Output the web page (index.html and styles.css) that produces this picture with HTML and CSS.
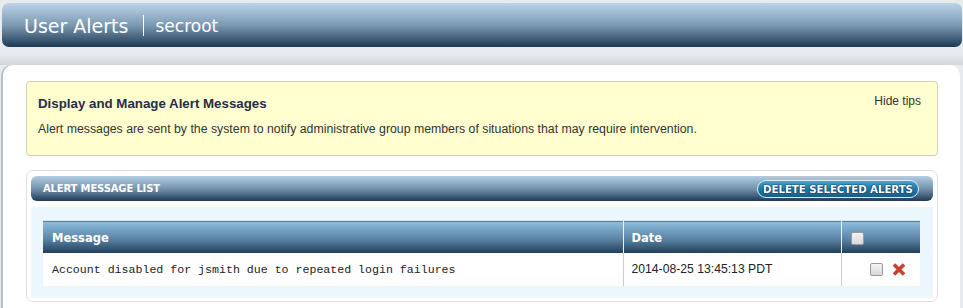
FILE: index.html
```html
<!DOCTYPE html>
<html>
<head>
<meta charset="utf-8">
<link rel="stylesheet" href="styles.css">
</head>
<body>
<div class="topbar">
  <span class="app-title">User Alerts</span>
  <span class="divider"></span>
  <span class="user">secroot</span>
</div>
<div class="gap"></div>
<div class="panel">
  <div class="tips">
    <div class="tips-head">
      <span class="tips-title">Display and Manage Alert Messages</span>
      <span class="hide-tips">Hide tips</span>
    </div>
    <p class="tips-text">Alert messages are sent by the system to notify administrative group members of situations that may require intervention.</p>
  </div>
  <div class="list-box">
    <div class="list-bar">
      <span class="list-title">ALERT MESSAGE LIST</span>
      <span class="btn-delete">DELETE SELECTED ALERTS</span>
    </div>
    <div class="list-body">
      <table class="alerts">
        <thead>
          <tr>
            <th class="col-msg">Message</th>
            <th class="col-date">Date</th>
            <th class="col-act"><span class="chk"></span></th>
          </tr>
        </thead>
        <tbody>
          <tr>
            <td class="msg">Account disabled for jsmith due to repeated login failures</td>
            <td class="date">2014-08-25 13:45:13 PDT</td>
            <td class="act"><span class="chk"></span><svg class="xicon" width="14" height="13" viewBox="0 0 14 13"><path d="M2 1.5 L12 11.5 M12 1.5 L2 11.5" stroke="#c8402c" stroke-width="3.6" stroke-linecap="butt"/></svg></td>
          </tr>
        </tbody>
      </table>
    </div>
  </div>
</div>
</body>
</html>
```

FILE: styles.css
```css
html, body {
  margin: 0;
  padding: 0;
}
body {
  background: #e8ebee;
  font-family: "Liberation Sans", Arial, sans-serif;
  width: 963px;
  height: 308px;
  overflow: hidden;
}
.topbar {
  margin: 3px 1px 0 2px;
  height: 44px;
  border-radius: 7px;
  background: linear-gradient(#bcd4e8, #7d9ab3 50%, #1d3954);
  display: flex;
  align-items: center;
  padding: 1px 0 0 22px;
  color: #fff;
  box-sizing: border-box;
}
.app-title {
  font-family: "DejaVu Sans", Verdana, sans-serif;
  font-size: 19px;
}
.divider {
  width: 1px;
  height: 21px;
  background: #fff;
  margin: 0 11px 0 15px;
}
.user {
  font-family: "DejaVu Sans", Verdana, sans-serif;
  font-size: 17px;
}
.gap {
  height: 18px;
  background: linear-gradient(#e8ebee 40%, #d2d6db);
}
.panel {
  margin: 0 3px 0 3px;
  background: #fff;
  border-radius: 10px 10px 0 0;
  padding: 16px 22px 0 23px;
  box-shadow: -2px 0 0 #b8c0c8;
  height: 243px;
  box-sizing: border-box;
}
.tips {
  background: #ffffcf;
  border: 1px solid #cfcfb8;
  border-radius: 4px;
  height: 75px;
  box-sizing: border-box;
  padding: 12px 16px 0 11px;
  color: #333;
  font-size: 12.3px;
}
.tips-head {
  display: flex;
  justify-content: space-between;
  align-items: flex-start;
}
.tips-title {
  font-weight: bold;
  font-size: 13.3px;
  color: #262d45;
  padding-top: 2px;
}
.hide-tips {
  color: #333;
  font-size: 12px;
}
.tips-text {
  margin: 11px 0 0 0;
}
.list-box {
  margin-top: 14px;
  border: 1px solid #dedede;
  border-radius: 7px;
  padding: 5px 4px 4px 4px;
  height: 132px;
  box-sizing: border-box;
}
.list-bar {
  height: 25px;
  border-radius: 6px;
  background: linear-gradient(#b3cee3, #6f8da8 55%, #1d3954);
  display: flex;
  align-items: center;
  justify-content: space-between;
  padding: 0 14px 0 12px;
}
.list-title {
  font-family: "DejaVu Sans", Verdana, sans-serif;
  font-weight: bold;
  font-size: 10px;
  color: #fff;
  letter-spacing: -0.15px;
}
.btn-delete {
  height: 18px;
  width: 162px;
  box-sizing: border-box;
  border: 1px solid #d8ecf6;
  border-radius: 9px;
  background: linear-gradient(#4aa2cf, #1e78ac 50%, #11608f);
  font-family: "DejaVu Sans", Verdana, sans-serif;
  font-weight: bold;
  font-size: 10.3px;
  color: #fff;
  letter-spacing: -0.1px;
  display: flex;
  align-items: center;
  justify-content: center;
  text-shadow: 0 0 1px #082c45, 0 0 1px #082c45, 0 0 1px #082c45;
  margin-top: 1px;
}
.list-body {
  margin-top: 6px;
  background: #ebf7fd;
  padding: 13px 13px 12px 12px;
}
.alerts {
  width: 100%;
  border-collapse: collapse;
  table-layout: fixed;
}
.alerts th {
  height: 32px;
  box-sizing: border-box;
  background: linear-gradient(#8dbedf, #5b84a4 55%, #1f3c58);
  color: #fff;
  font-family: "DejaVu Sans", Verdana, sans-serif;
  font-size: 11.5px;
  font-weight: bold;
  text-align: left;
  padding: 3px 0 0 9px;
  border-top: 1px solid #d6e8f3;
}
.alerts th + th {
  border-left: 1px solid #e8f2f8;
}
.col-msg { width: 580px; }
.col-date { width: 218px; }
.alerts th.col-date { padding-left: 8px; }
.col-act { width: auto; }
.alerts td {
  height: 33px;
  background: #fff;
  padding: 0 0 0 9px;
  color: #222;
}
.alerts td + td {
  border-left: 1px solid #cccccc;
}
.msg {
  font-family: "Liberation Mono", "Courier New", monospace;
  font-size: 11.6px;
}
.alerts td.date {
  font-size: 12.2px;
  padding-left: 8px;
}
.alerts td.act {
  text-align: right;
  padding: 0 14px 0 0;
}
.chk {
  display: inline-block;
  width: 11px;
  height: 11px;
  border: 1px solid #9a9a9a;
  border-radius: 2px;
  background: linear-gradient(#f4f4f4, #d8d8d8);
  vertical-align: middle;
}
.act .chk {
  margin-right: 9px;
}
.xicon {
  vertical-align: middle;
}
```
